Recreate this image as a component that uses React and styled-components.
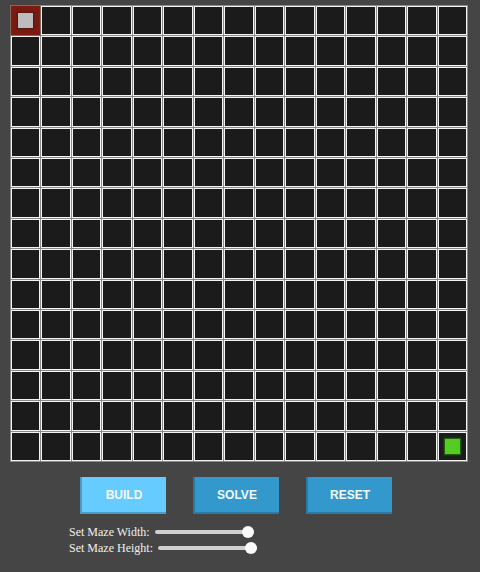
import React from "react";
import styled, { createGlobalStyle } from "styled-components";

const Global = createGlobalStyle`
  html, body { margin: 0; padding: 0; background: #454545; }
  body { width: 480px; height: 572px; overflow: hidden; }
`;

const Page = styled.div`
  padding: 5px 0 0 10px;
  width: 480px;
  height: 572px;
  box-sizing: border-box;
  background: #454545;
`;

const Grid = styled.div`
  width: 458px;
  height: 457px;
  box-sizing: border-box;
  border: 1px solid #8a8a8a;
  background: #8a8a8a;
  display: grid;
  grid-template-columns: repeat(15, 1fr);
  grid-template-rows: repeat(15, 1fr);
  gap: 1px;
`;

const Cell = styled.div`
  box-sizing: border-box;
  border: 1px solid ${(p) => (p.$start ? "#7d1d13" : "#f4f4f4")};
  background: ${(p) => (p.$start ? "#7a1b12" : "#1b1b1b")};
  display: flex;
  align-items: center;
  justify-content: center;
  ${(p) => (p.$start ? "box-shadow: 0 0 2px #7a1b12;" : "")}
`;

const Marker = styled.div`
  width: 17px;
  height: 17px;
  box-sizing: border-box;
  border: 1px solid ${(p) => p.$edge};
  background: ${(p) => p.$fill};
  box-shadow: 0 0 2px ${(p) => p.$edge};
`;

const Buttons = styled.div`
  width: 458px;
  display: flex;
  justify-content: center;
  gap: 27px;
  margin-top: 15px;
  padding-right: 6px;
  box-sizing: border-box;
`;

const Button = styled.button`
  width: 86px;
  height: 37px;
  border: none;
  border-left: 2px solid ${(p) => (p.$active ? "#4a9ec6" : "#2a7aa3")};
  border-bottom: 2px solid ${(p) => (p.$active ? "#4a9ec6" : "#2a7aa3")};
  background: ${(p) => (p.$active ? "#66ccff" : "#3399cc")};
  color: #f4f8fb;
  font-family: "Liberation Sans", Arial, sans-serif;
  font-weight: bold;
  font-size: 12px;
  padding: 0;
  cursor: pointer;
`;

const Controls = styled.div`
  margin-top: 10px;
  padding-left: 59px;
  font-family: "Liberation Serif", "Times New Roman", serif;
  font-size: 12px;
  color: #f0f0f0;
  display: flex;
  flex-direction: column;
`;

const Row = styled.label`
  display: flex;
  align-items: center;
  height: 16px;
`;

const Range = styled.input`
  -webkit-appearance: none;
  appearance: none;
  width: 99px;
  height: 12px;
  margin: 0 0 0 5px;
  background: transparent;
  &::-webkit-slider-runnable-track {
    height: 4px;
    background: #cfcfcf;
    border-radius: 2px;
  }
  &::-webkit-slider-thumb {
    -webkit-appearance: none;
    width: 12px;
    height: 12px;
    border-radius: 50%;
    background: #fafafa;
    margin-top: -4px;
    border: none;
  }
`;

const N = 15;

export default function App() {
  const cells = [];
  for (let r = 0; r < N; r++) {
    for (let c = 0; c < N; c++) {
      const start = r === 0 && c === 0;
      const end = r === N - 1 && c === N - 1;
      cells.push(
        <Cell key={`${r}-${c}`} $start={start}>
          {start && <Marker $fill="#bdbdbd" $edge="#5a1810" />}
          {end && <Marker $fill="#55cc22" $edge="#1f5a10" />}
        </Cell>
      );
    }
  }
  return (
    <Page>
      <Global />
      <Grid>{cells}</Grid>
      <Buttons>
        <Button $active>BUILD</Button>
        <Button>SOLVE</Button>
        <Button>RESET</Button>
      </Buttons>
      <Controls>
        <Row>
          Set Maze Width:
          <Range type="range" min="5" max="15" defaultValue="15" />
        </Row>
        <Row>
          Set Maze Height:
          <Range type="range" min="5" max="15" defaultValue="15" />
        </Row>
      </Controls>
    </Page>
  );
}
